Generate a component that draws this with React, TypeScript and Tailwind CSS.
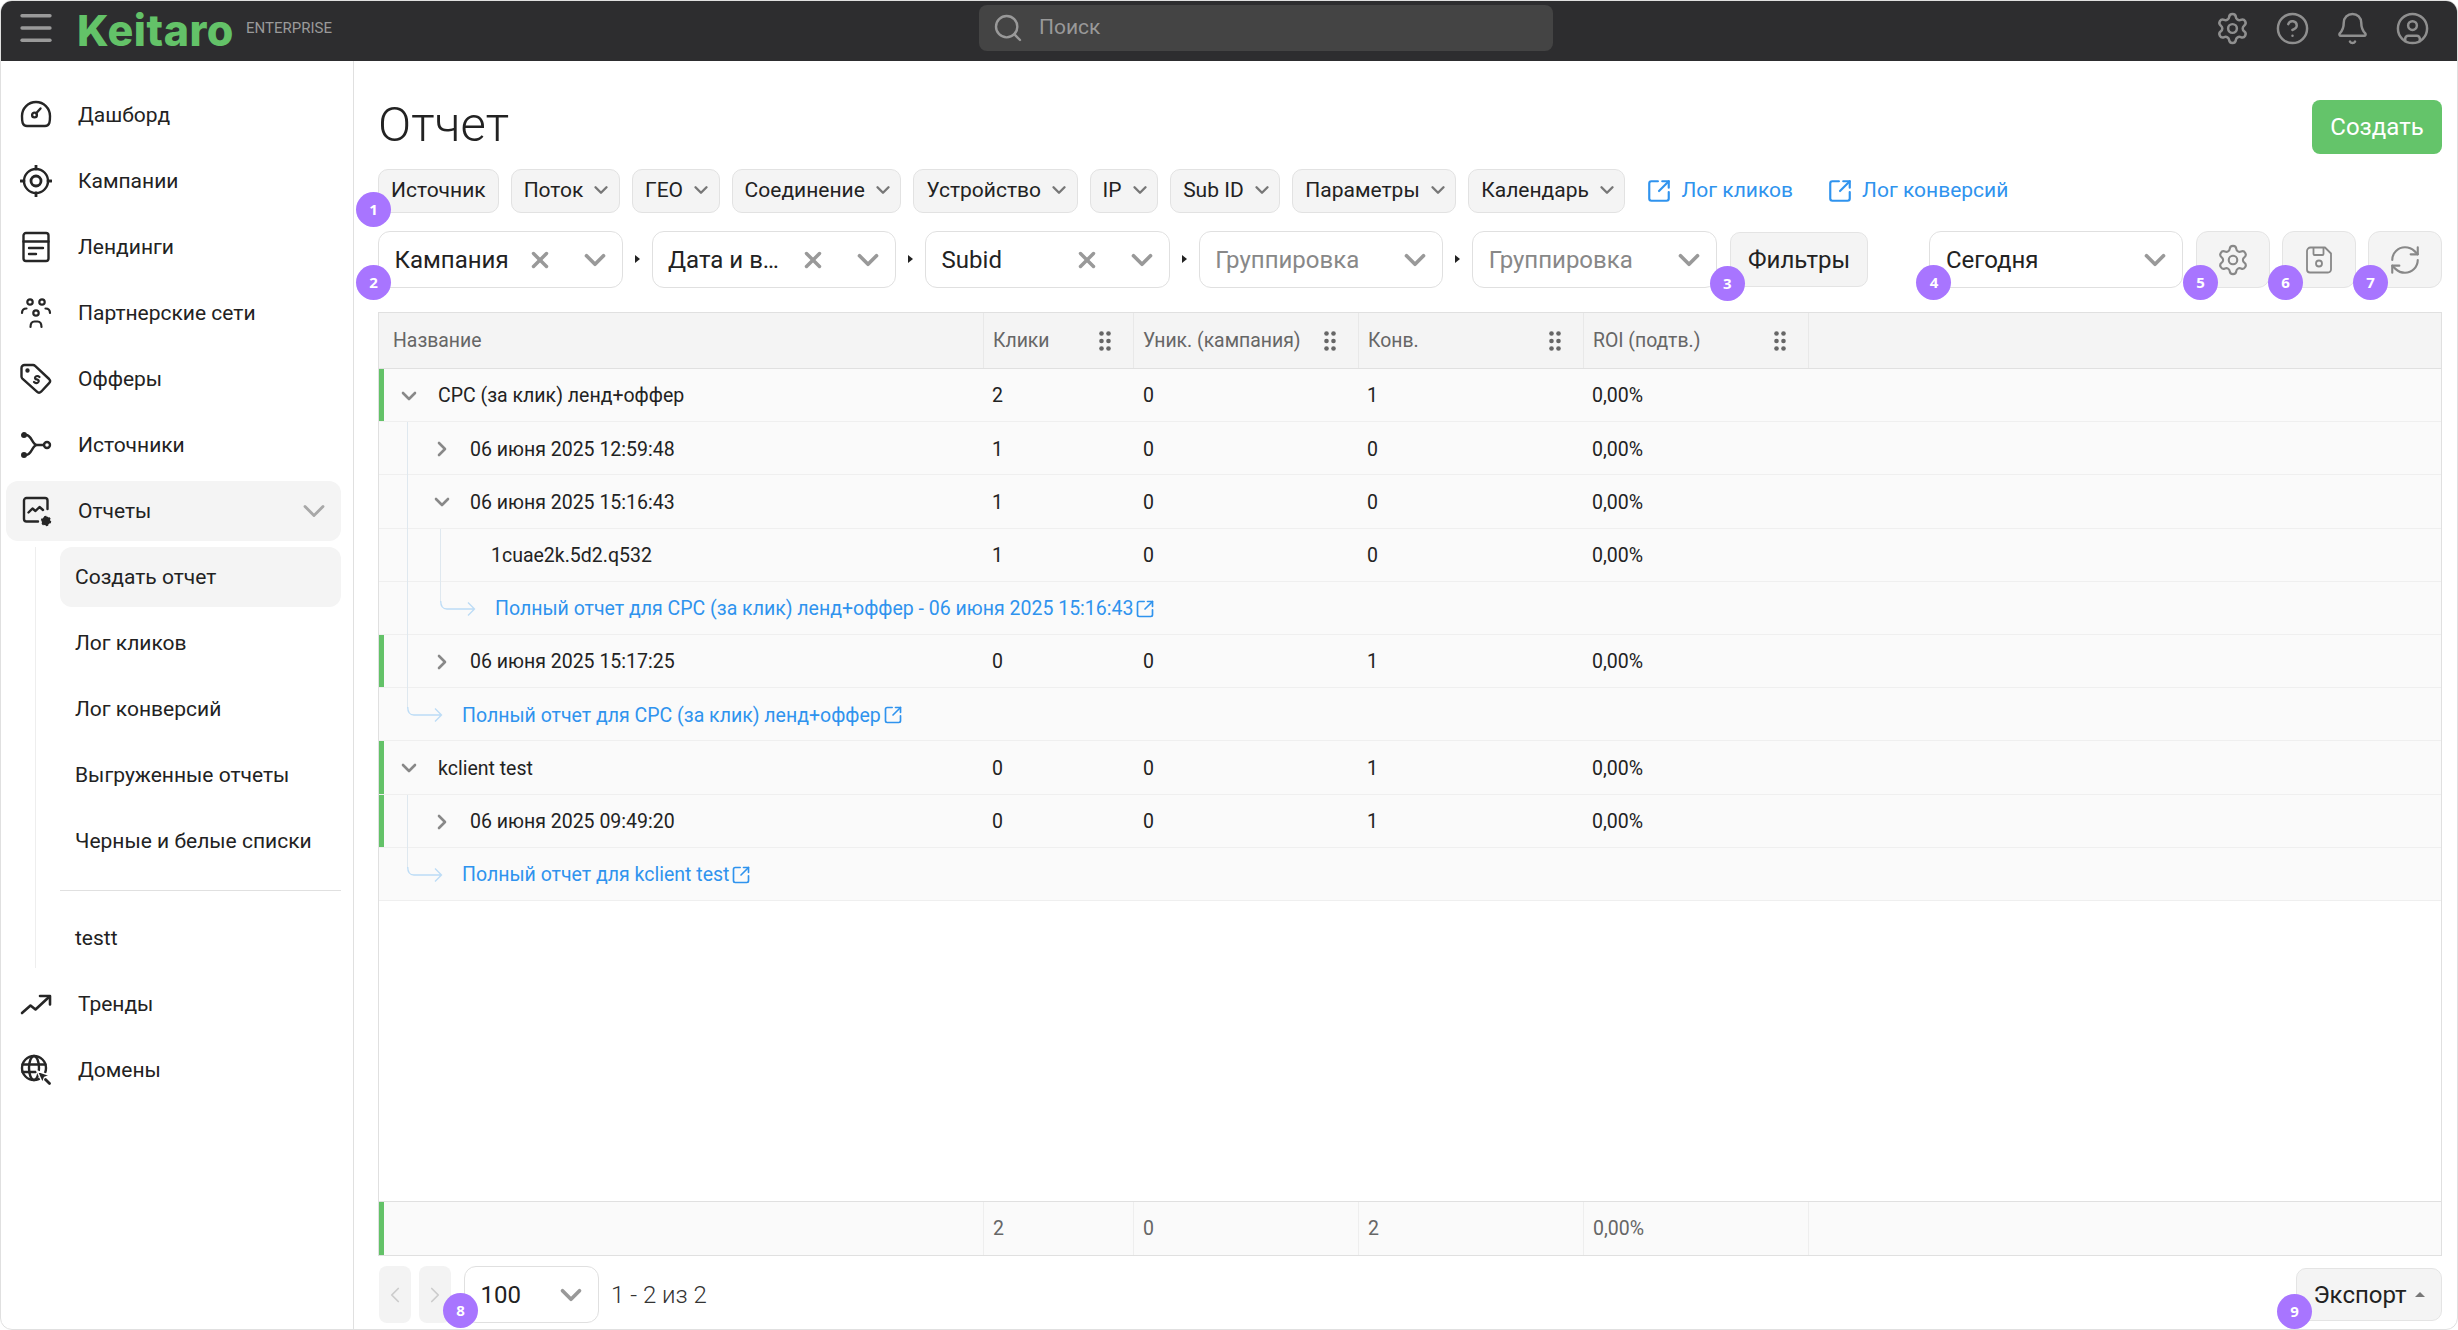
import { ReactNode } from "react"
import { Bell, ChevronDown, ChevronLeft, ChevronRight, CircleHelp, CircleUser, Menu, RefreshCw, Search, Settings, SquareArrowOutUpRight, X } from "lucide-react"

const svgProps = {
  viewBox: "0 0 32 32",
  fill: "none",
  stroke: "currentColor",
  strokeWidth: 2.4,
  strokeLinecap: "round" as const,
  strokeLinejoin: "round" as const,
  className: "h-[32px] w-[32px] shrink-0 text-[#262626]",
}

function DashboardIcon() {
  return (
    <svg {...svgProps}>
      <path d="M2 17A14 14 0 1 1 30 17C30 22 30 27 25 27H7C2 27 2 22 2 17Z" />
      <circle cx="14.500" cy="16" r="2.400" />
      <path d="M16.200 14.300 20.500 9.500" />
    </svg>
  )
}

function CampaignIcon() {
  return (
    <svg {...svgProps}>
      <circle cx="16" cy="16" r="12" />
      <circle cx="16" cy="16" r="5" strokeWidth={2.800} />
      <path d="M16 .5v3.500M16 28v3.500M.5 16H4M28 16h3.500" strokeWidth={2.800} />
    </svg>
  )
}

function LandingIcon() {
  return (
    <svg {...svgProps}>
      <rect x="3.500" y="2" width="25" height="28" rx="2.500" />
      <path d="M3.500 10.500h25M9 17h14M9 23h7" />
    </svg>
  )
}

function PartnersIcon() {
  return (
    <svg {...svgProps} strokeWidth={2.200}>
      <circle cx="10" cy="5" r="2.700" />
      <circle cx="22" cy="5" r="2.700" />
      <circle cx="16" cy="16" r="2.700" />
      <path d="M2 16c0-3 2-4.500 4.500-4.500M30 16c0-3-2-4.500-4.500-4.500M10.500 30c0-3.500 1.500-5.500 4-5.500h3c2.500 0 4 2 4 5.500" />
    </svg>
  )
}

function OffersIcon() {
  return (
    <svg {...svgProps}>
      <path d="M1.500 5a3 3 0 0 1 3-3h8.500a3 3 0 0 1 2.100.9l14 13.100a3 3 0 0 1 0 4.200l-8 8.500a3 3 0 0 1-4.200 0L2.400 15.700a3 3 0 0 1-.9-2.100Z" />
      <circle cx="7.500" cy="7.500" r="1" fill="currentColor" />
      <path d="M19.500 14c-1.500-1.500-3.500-1.200-4.200 0s0 2.200 1.400 2.400 2.800 1 1.700 2.600-3.200 1.200-4.400 0" strokeWidth={2.200} />
    </svg>
  )
}

function SourcesIcon() {
  return (
    <svg {...svgProps}>
      <circle cx="4" cy="6" r="1.800" fill="currentColor" />
      <circle cx="4" cy="26" r="1.800" fill="currentColor" />
      <circle cx="27" cy="16" r="3" />
      <path d="M4 6h2c6 0 6 10 11 10h7M4 26h2c6 0 6-10 11-10" />
    </svg>
  )
}

function ReportsIcon() {
  return (
    <svg {...svgProps}>
      <path d="M27.500 14V5.500A2.500 2.500 0 0 0 25 3H6.500A2.500 2.500 0 0 0 4 5.500V24A2.500 2.500 0 0 0 6.500 26.500H18" />
      <path d="M8.500 17.500l4-4 3 2.500 4-4 3.500 3" />
      <circle cx="26" cy="26" r="3.200" fill="currentColor" />
      <circle cx="26" cy="26" r="4.200" strokeDasharray="2 2.400" strokeLinecap="butt" strokeWidth={2} />
    </svg>
  )
}

function TrendsIcon() {
  return (
    <svg {...svgProps} strokeWidth={2.600}>
      <path d="M2 25l8.500-7.500 5 4L29 9" />
      <path d="M20 8h10v8.500" />
    </svg>
  )
}

function DomainsIcon() {
  return (
    <svg {...svgProps}>
      <circle cx="14" cy="14" r="12" />
      <ellipse cx="14" cy="14" rx="5" ry="12" />
      <path d="M2.500 10.500h23M2.500 18h13" />
      <path d="M17 17l13 4.500-5.500 2-2 5.500Z" fill="currentColor" stroke="#fff" strokeWidth={1.500} />
      <path d="M25.500 25.500l4 4" strokeWidth={2.800} />
    </svg>
  )
}

function SaveIcon() {
  return (
    <svg viewBox="0 0 32 32" fill="none" stroke="currentColor" strokeWidth={1.800} strokeLinejoin="round" className="h-[32px] w-[32px] text-[#888]">
      <path d="M7.500 3.500h14.500l6 6v16a3 3 0 0 1-3 3H7a3 3 0 0 1-3-3V7a3.500 3.500 0 0 1 3.500-3.500Z" />
      <path d="M10.500 3.500v6.500a1 1 0 0 0 1 1h8a1 1 0 0 0 1-1V3.500" />
      <circle cx="16" cy="19.500" r="3" />
    </svg>
  )
}

function DragDots() {
  return (
    <svg viewBox="0 0 12 20" className="h-[20px] w-[12px] text-[#666]" fill="currentColor">
      <circle cx="2.500" cy="2.500" r="2.300" />
      <circle cx="9.500" cy="2.500" r="2.300" />
      <circle cx="2.500" cy="10" r="2.300" />
      <circle cx="9.500" cy="10" r="2.300" />
      <circle cx="2.500" cy="17.500" r="2.300" />
      <circle cx="9.500" cy="17.500" r="2.300" />
    </svg>
  )
}

function Badge({ n, className }: { n: number; className: string }) {
  return (
    <span className={`absolute z-10 flex h-[35px] w-[35px] items-center justify-center rounded-full bg-[#a875ff] font-['Open_Sans',sans-serif] text-[15px] font-bold text-white ${className}`}>
      {n}
    </span>
  )
}

function NavItem({ icon, label, active, caret }: { icon: ReactNode; label: string; active?: boolean; caret?: boolean }) {
  return (
    <div className={`flex h-[60px] items-center gap-[26px] rounded-[12px] pl-[14px] pr-[9px] ${active ? "bg-[#f4f4f4]" : ""}`}>
      {icon}
      <span className="flex-1 pt-[2px] text-[21px] text-[#222]">{label}</span>
      {caret && <ChevronDown size={36} strokeWidth={1.900} className="text-[#a8a8a8]" />}
    </div>
  )
}

function SubItem({ label, active }: { label: string; active?: boolean }) {
  return (
    <div className={`flex h-[60px] items-center rounded-[12px] pl-[15px] pt-[2px] text-[21px] text-[#222] ${active ? "bg-[#f4f4f4]" : ""}`}>
      {label}
    </div>
  )
}

function Sidebar() {
  return (
    <aside className="flex w-[353px] shrink-0 flex-col gap-[6px] border-r border-[#e0e0e0] pl-[5px] pr-[12px] pt-[24px]">
      <NavItem icon={<DashboardIcon />} label="Дашборд" />
      <NavItem icon={<CampaignIcon />} label="Кампании" />
      <NavItem icon={<LandingIcon />} label="Лендинги" />
      <NavItem icon={<PartnersIcon />} label="Партнерские сети" />
      <NavItem icon={<OffersIcon />} label="Офферы" />
      <NavItem icon={<SourcesIcon />} label="Источники" />
      <NavItem icon={<ReportsIcon />} label="Отчеты" active caret />
      <div className="ml-[29px] flex flex-col gap-[6px] border-l border-[#eeeeee] pl-[24px]">
        <SubItem label="Создать отчет" active />
        <SubItem label="Лог кликов" />
        <SubItem label="Лог конверсий" />
        <SubItem label="Выгруженные отчеты" />
        <SubItem label="Черные и белые списки" />
        <div className="mb-[11px] mt-[13px] h-px bg-[#e0e0e0]" />
        <SubItem label="testt" />
      </div>
      <NavItem icon={<TrendsIcon />} label="Тренды" />
      <NavItem icon={<DomainsIcon />} label="Домены" />
    </aside>
  )
}

function FilterButton({ label, caret = true, children }: { label: string; caret?: boolean; children?: ReactNode }) {
  return (
    <button className={`relative flex h-[44px] items-center gap-[7px] rounded-[10px] border border-[#e2e2e2] bg-[#f4f4f4] pl-[12px] text-[21px] text-[#222] ${caret ? "pr-[6.6px]" : "pr-[12px]"}`}>
      {label}
      {caret && <ChevronDown size={22} strokeWidth={2.600} className="-translate-y-px text-[#777]" />}
      {children}
    </button>
  )
}

function SelectBox({ value, placeholder, clear, className, children }: { value: string; placeholder?: boolean; clear?: boolean; className: string; children?: ReactNode }) {
  return (
    <div className={`relative flex h-[57px] items-center rounded-[12px] border border-[#e0e0e0] bg-white pl-[15.5px] pr-[10px] text-[24px] ${className}`}>
      <span className={`flex-1 truncate ${placeholder ? "text-[#888]" : "text-[#222]"}`}>{value}</span>
      {clear && <X size={26} strokeWidth={3.200} className="mr-[25px] text-[#999]" />}
      <ChevronDown size={34} strokeWidth={2.600} className="text-[#999]" />
      {children}
    </div>
  )
}

function Caret() {
  return <span className="mx-[12px] h-0 w-0 -translate-y-px border-y-[4px] border-l-[5px] border-y-transparent border-l-[#222]" />
}

function IconButton({ children, badge }: { children: ReactNode; badge: ReactNode }) {
  return (
    <button className="relative flex h-[57px] w-[74px] items-center justify-center rounded-[12px] border border-[#e4e4e4] bg-[#f4f4f4]">
      {children}
      {badge}
    </button>
  )
}

type RowData = {
  kind: "root" | "child" | "leaf"
  open?: boolean
  name: string
  clicks: string
  uniq: string
  conv: string
  marked?: boolean
}

function Numbers({ clicks, uniq, conv }: { clicks: string; uniq: string; conv: string }) {
  return (
    <>
      <div className="pl-[9px] pt-[2px]">{clicks}</div>
      <div className="pl-[10px] pt-[2px]">{uniq}</div>
      <div className="pl-[9px] pt-[2px]">{conv}</div>
      <div className="pl-[9px] pt-[2px]">0,00%</div>
      <div />
    </>
  )
}

const rowGrid = "grid h-[53.2px] grid-cols-[604px_150px_225px_225px_225px_1fr] items-center border-b border-[#efefef] bg-[#fafafa] text-[19.5px] text-[#222]"

function Row({ kind, open, name, clicks, uniq, conv, marked }: RowData) {
  const indent = kind === "root" ? "pl-[13px]" : kind === "child" ? "pl-[46px]" : "pl-[107px]"
  return (
    <div className={rowGrid}>
      <div className={`flex h-full items-center border-l-[5px] pt-[2px] ${marked ? "border-[#63c268]" : "border-transparent"} ${indent}`}>
        {kind !== "leaf" && (
          <span className={`flex shrink-0 ${kind === "root" ? "w-[41px]" : "w-[40px]"}`}>
            {open ? <ChevronDown size={24} strokeWidth={2.600} className="text-[#888]" /> : <ChevronRight size={24} strokeWidth={2.600} className="text-[#888]" />}
          </span>
        )}
        {name}
      </div>
      <Numbers clicks={clicks} uniq={uniq} conv={conv} />
    </div>
  )
}

function LinkRow({ label, nested }: { label: string; nested?: boolean }) {
  return (
    <div className={`relative flex h-[53.2px] items-center border-b border-[#efefef] bg-[#fafafa] pt-[2px] text-[19.5px] text-[#2f93ee] ${nested ? "pl-[116px]" : "pl-[83px]"}`}>
      <svg viewBox="0 0 36 16" fill="none" stroke="#bcdcf6" strokeWidth={1.300} className={`absolute top-[19px] h-[16px] w-[36px] ${nested ? "left-[61px]" : "left-[28px]"}`}>
        <path d="M.7 0C.7 5 3 8 7 8H34M28 1.500 34.500 8 28 14.500" />
      </svg>
      {label}
      <SquareArrowOutUpRight size={20} strokeWidth={2} className="ml-[2px]" />
    </div>
  )
}

function TreeLine({ className }: { className: string }) {
  return <span className={`absolute z-10 w-px bg-[#dfe8ef] ${className}`} />
}

function HeaderCell({ label }: { label: string }) {
  return (
    <div className="flex h-full items-center justify-between border-l border-[#e8e8e8] pl-[9px] pr-[22px]">
      {label}
      <DragDots />
    </div>
  )
}

function ReportTable() {
  return (
    <div className="flex flex-1 flex-col border border-[#e0e0e0] bg-white">
      <div className="grid h-[56px] grid-cols-[604px_150px_225px_225px_225px_1fr] items-center border-b border-[#e0e0e0] bg-[#f4f4f4] text-[19.4px] text-[#666]">
        <div className="pl-[14px]">Название</div>
        <HeaderCell label="Клики" />
        <HeaderCell label="Уник. (кампания)" />
        <HeaderCell label="Конв." />
        <HeaderCell label="ROI (подтв.)" />
        <div className="h-full border-l border-[#e8e8e8]" />
      </div>

      <Row kind="root" open marked name="CPC (за клик) ленд+оффер" clicks="2" uniq="0" conv="1" />
      <div className="relative">
        <TreeLine className="bottom-[34px] left-[28px] top-0" />
        <Row kind="child" name="06 июня 2025 12:59:48" clicks="1" uniq="0" conv="0" />
        <Row kind="child" open name="06 июня 2025 15:16:43" clicks="1" uniq="0" conv="0" />
        <div className="relative">
          <TreeLine className="bottom-[34px] left-[61px] top-0" />
          <Row kind="leaf" name="1cuae2k.5d2.q532" clicks="1" uniq="0" conv="0" />
          <LinkRow nested label="Полный отчет для CPC (за клик) ленд+оффер - 06 июня 2025 15:16:43" />
        </div>
        <Row kind="child" marked name="06 июня 2025 15:17:25" clicks="0" uniq="0" conv="1" />
        <LinkRow label="Полный отчет для CPC (за клик) ленд+оффер" />
      </div>
      <Row kind="root" open marked name="kclient test" clicks="0" uniq="0" conv="1" />
      <div className="relative">
        <TreeLine className="bottom-[34px] left-[28px] top-0" />
        <Row kind="child" marked name="06 июня 2025 09:49:20" clicks="0" uniq="0" conv="1" />
        <LinkRow label="Полный отчет для kclient test" />
      </div>

      <div className="flex-1" />

      <div className="grid h-[54px] grid-cols-[604px_150px_225px_225px_225px_1fr] items-center border-t border-[#e0e0e0] bg-[#fafafa] text-[19.5px] text-[#666]">
        <div className="h-full border-l-[5px] border-[#63c268]" />
        <div className="flex h-full items-center border-l border-[#eeeeee] pl-[9px]">2</div>
        <div className="flex h-full items-center border-l border-[#eeeeee] pl-[9px]">0</div>
        <div className="flex h-full items-center border-l border-[#eeeeee] pl-[9px]">2</div>
        <div className="flex h-full items-center border-l border-[#eeeeee] pl-[9px]">0,00%</div>
        <div className="h-full border-l border-[#eeeeee]" />
      </div>
    </div>
  )
}

export default function App() {
  return (
    <div className="flex h-[1330px] w-[2458px] flex-col overflow-hidden rounded-[12px] border border-[#e0e0e0] bg-white font-['Roboto',sans-serif]">
      <header className="flex h-[60px] shrink-0 items-center bg-[#2d2d2f] pb-[6px]">
        <div className="flex w-[978px] items-center">
          <Menu size={42} strokeWidth={1.900} className="ml-[14px] text-[#9a9a9a]" />
          <span className="ml-[20px] mt-[4px] font-['Inter',sans-serif] text-[43px] font-extrabold leading-none tracking-[0.5px] text-[#63c268]">Keitaro</span>
          <span className="ml-[12px] text-[15px] text-[#9a9a9a]">ENTERPRISE</span>
        </div>
        <div className="flex h-[46px] w-[574px] items-center gap-[15px] rounded-[8px] bg-[#444444] pl-[13px] text-[21px] text-[#999]">
          <Search size={32} strokeWidth={1.800} />
          Поиск
        </div>
        <div className="flex flex-1 items-center justify-end gap-[25px] pr-[27px] text-[#8f8f8f]">
          <Settings size={35} strokeWidth={1.700} />
          <CircleHelp size={35} strokeWidth={1.700} />
          <Bell size={35} strokeWidth={1.700} />
          <CircleUser size={35} strokeWidth={1.700} />
        </div>
      </header>

      <div className="flex min-h-0 flex-1">
        <Sidebar />
        <main className="flex min-w-0 flex-1 flex-col pb-[6px] pl-[24px] pr-[15px] pt-[39px]">
          <div className="flex h-[54px] items-center justify-between">
            <h1 className="-mt-[6px] text-[49px] font-light leading-none text-[#222]">Отчет</h1>
            <button className="flex h-[54px] w-[130px] items-center justify-center rounded-[8px] bg-[#64c46a] text-[24px] text-white">Создать</button>
          </div>

          <div className="mt-[15px] flex items-center gap-[12px]">
            <FilterButton label="Источник" caret={false}>
              <Badge n={1} className="-left-[23px] top-[22px]" />
            </FilterButton>
            <FilterButton label="Поток" />
            <FilterButton label="ГЕО" />
            <FilterButton label="Соединение" />
            <FilterButton label="Устройство" />
            <FilterButton label="IP" />
            <FilterButton label="Sub ID" />
            <FilterButton label="Параметры" />
            <FilterButton label="Календарь" />
            <a className="ml-[9px] flex items-center gap-[9px] text-[21px] text-[#2f93ee]">
              <SquareArrowOutUpRight size={26} strokeWidth={2} />
              Лог кликов
            </a>
            <a className="ml-[22px] flex items-center gap-[9px] text-[21px] text-[#2f93ee]">
              <SquareArrowOutUpRight size={26} strokeWidth={2} />
              Лог конверсий
            </a>
          </div>

          <div className="mt-[18px] flex items-center">
            <SelectBox value="Кампания" clear className="w-[245px]">
              <Badge n={2} className="-left-[23px] top-[33px]" />
            </SelectBox>
            <Caret />
            <SelectBox value="Дата и в…" clear className="w-[245px]" />
            <Caret />
            <SelectBox value="Subid" clear className="w-[245px]" />
            <Caret />
            <SelectBox value="Группировка" placeholder className="w-[245px]" />
            <Caret />
            <SelectBox value="Группировка" placeholder className="w-[245px]" />
            <button className="relative ml-[13px] h-[55px] w-[139px] rounded-[10px] border border-[#e4e4e4] bg-[#f4f4f4] text-[24px] text-[#222]">
              Фильтры
              <Badge n={3} className="-left-[21px] top-[33px]" />
            </button>
            <SelectBox value="Сегодня" className="ml-[61px] w-[254px]">
              <Badge n={4} className="-left-[14px] top-[33px]" />
            </SelectBox>
            <div className="ml-[13px] flex gap-[12px]">
              <IconButton badge={<Badge n={5} className="-left-[14px] top-[33px]" />}>
                <Settings size={34} strokeWidth={1.500} className="text-[#888]" />
              </IconButton>
              <IconButton badge={<Badge n={6} className="-left-[15px] top-[33px]" />}>
                <SaveIcon />
              </IconButton>
              <IconButton badge={<Badge n={7} className="-left-[16px] top-[33px]" />}>
                <RefreshCw size={34} strokeWidth={1.500} className="text-[#888]" />
              </IconButton>
            </div>
          </div>

          <div className="mt-[24px] flex min-h-0 flex-1 flex-col">
            <ReportTable />
          </div>

          <div className="mt-[10px] flex items-center">
            <button className="ml-px flex h-[57px] w-[32px] items-center justify-center rounded-[8px] bg-[#f3f3f3] text-[#ccc]">
              <ChevronLeft size={26} strokeWidth={1.600} />
            </button>
            <button className="relative ml-[8px] flex h-[57px] w-[32px] items-center justify-center rounded-[8px] bg-[#f3f3f3] text-[#ccc]">
              <ChevronRight size={26} strokeWidth={1.600} />
              <Badge n={8} className="left-[24px] top-[27px]" />
            </button>
            <SelectBox value="100" className="ml-[13px] w-[135px]" />
            <span className="ml-[12px] text-[24px] font-light text-[#333]">1 - 2 из 2</span>
            <button className="relative ml-auto flex h-[53px] w-[146px] items-center justify-center gap-[8px] rounded-[10px] border border-[#e4e4e4] bg-[#f4f4f4] text-[24px] text-[#222]">
              Экспорт
              <span className="h-0 w-0 border-x-[5px] border-b-[5px] border-x-transparent border-b-[#777]" />
              <Badge n={9} className="-left-[20px] top-[25px]" />
            </button>
          </div>
        </main>
      </div>
    </div>
  )
}
